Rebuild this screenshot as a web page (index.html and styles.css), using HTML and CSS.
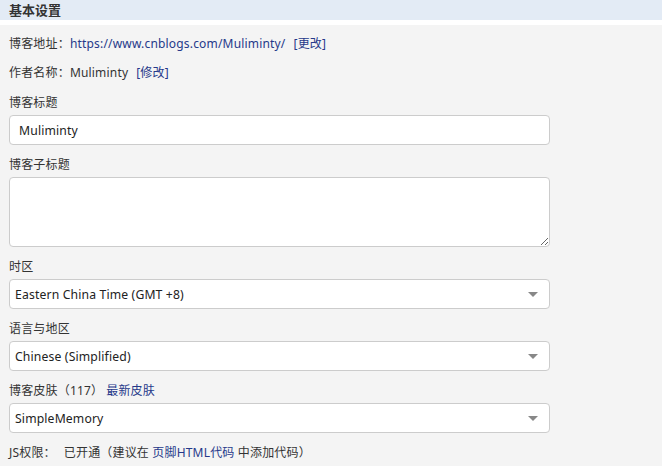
FILE: index.html
```html
<!DOCTYPE html>
<html lang="zh-CN">
<head>
<meta charset="utf-8">
<title>基本设置</title>
<link rel="stylesheet" href="styles.css">
</head>
<body>
<div class="panel">
  <div class="panel-head">
    <h2 class="panel-title">基本设置</h2>
  </div>
  <div class="panel-body">
    <div class="info-row">博客地址：<a class="link" href="#">https://www.cnblogs.com/Muliminty/</a><a class="link bracket" href="#">[更改]</a></div>
    <div class="info-row info-last">作者名称：Muliminty<a class="link bracket" href="#">[修改]</a></div>

    <div class="field">
      <label class="field-label">博客标题</label>
      <input class="control text-input" type="text" value="Muliminty">
    </div>
    <div class="field">
      <label class="field-label">博客子标题</label>
      <textarea class="control text-area"></textarea>
    </div>
    <div class="field">
      <label class="field-label">时区</label>
      <div class="control select"><span>Eastern China Time (GMT +8)</span><i class="caret"></i></div>
    </div>
    <div class="field">
      <label class="field-label">语言与地区</label>
      <div class="control select"><span>Chinese (Simplified)</span><i class="caret"></i></div>
    </div>
    <div class="field">
      <label class="field-label">博客皮肤（117）<a class="link" href="#">最新皮肤</a></label>
      <div class="control select"><span>SimpleMemory</span><i class="caret"></i></div>
    </div>
    <div class="js-row">JS权限：<span class="js-status">已开通（建议在 <a class="link" href="#">页脚HTML代码</a> 中添加代码）</span></div>
  </div>
</div>
</body>
</html>
```

FILE: styles.css
```css
html, body {
  margin: 0;
  padding: 0;
  background: #f4f4f4;
}
body {
  font-family: "Noto Sans", "Noto Sans CJK SC", sans-serif;
  font-size: 12px;
  letter-spacing: 0.18px;
  color: #333;
}
.panel-head {
  height: 20px;
  background: #e3ebf5;
  border-bottom: 5px solid #ffffff;
  padding: 0 9px;
}
.panel-title {
  margin: 0;
  font-size: 13px;
  font-weight: bold;
  line-height: 20px;
  letter-spacing: 0;
  color: #333;
}
.panel-body {
  padding: 10px 9px 0;
}
.info-row {
  line-height: 18px;
  margin-bottom: 11px;
}
.info-last {
  margin-bottom: 12px;
}
.link {
  color: #26398a;
  text-decoration: none;
}
.bracket {
  margin-left: 8px;
}
.field {
  margin-bottom: 11px;
}
.field-label {
  display: block;
  line-height: 18px;
  margin-bottom: 3px;
}
.field-label .link {
  margin-left: 3px;
}
.control {
  display: block;
  box-sizing: border-box;
  width: 541px;
  height: 30px;
  margin: 0;
  background: #fff;
  border: 1px solid #cccccc;
  border-radius: 4px;
  font-family: "Noto Sans", "Noto Sans CJK SC", sans-serif;
  font-size: 12.2px;
  letter-spacing: 0.15px;
  color: #222;
}
.text-input {
  padding: 0 9px;
  outline: none;
}
.text-area {
  height: 70px;
  resize: vertical;
  padding: 4px 9px;
}
.select {
  display: flex;
  align-items: center;
  justify-content: space-between;
  padding: 0 11px 0 5px;
}
.caret {
  width: 0;
  height: 0;
  border-left: 5px solid transparent;
  border-right: 5px solid transparent;
  border-top: 5px solid #888;
}
.js-row {
  line-height: 18px;
  margin-top: 11px;
}
.js-status {
  margin-left: 8px;
}
```
